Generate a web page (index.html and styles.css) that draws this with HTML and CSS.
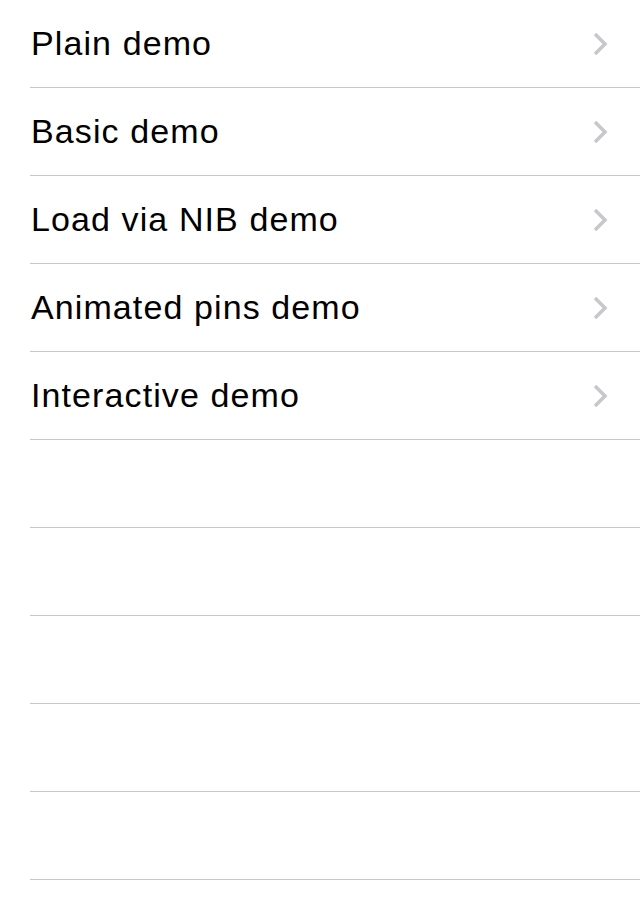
FILE: index.html
```html
<!DOCTYPE html>
<html>
<head>
<meta charset="utf-8">
<link rel="stylesheet" href="styles.css">
</head>
<body>
<ul class="list">
  <li class="row"><span class="label">Plain demo</span><svg class="chev" width="18" height="24" viewBox="0 0 18 24"><path d="M4 2 L14 12 L4 22" fill="none" stroke="#c7c7cc" stroke-width="3.5"/></svg></li>
  <li class="row"><span class="label">Basic demo</span><svg class="chev" width="18" height="24" viewBox="0 0 18 24"><path d="M4 2 L14 12 L4 22" fill="none" stroke="#c7c7cc" stroke-width="3.5"/></svg></li>
  <li class="row"><span class="label">Load via NIB demo</span><svg class="chev" width="18" height="24" viewBox="0 0 18 24"><path d="M4 2 L14 12 L4 22" fill="none" stroke="#c7c7cc" stroke-width="3.5"/></svg></li>
  <li class="row"><span class="label">Animated pins demo</span><svg class="chev" width="18" height="24" viewBox="0 0 18 24"><path d="M4 2 L14 12 L4 22" fill="none" stroke="#c7c7cc" stroke-width="3.5"/></svg></li>
  <li class="row"><span class="label">Interactive demo</span><svg class="chev" width="18" height="24" viewBox="0 0 18 24"><path d="M4 2 L14 12 L4 22" fill="none" stroke="#c7c7cc" stroke-width="3.5"/></svg></li>
  <li class="row"></li>
  <li class="row"></li>
  <li class="row"></li>
  <li class="row"></li>
  <li class="row"></li>
</ul>
</body>
</html>
```
FILE: styles.css
```css
html, body {
  margin: 0;
  padding: 0;
  background: #ffffff;
}
.list {
  list-style: none;
  margin: 0;
  padding: 0 0 0 30px;
}
.row {
  height: 87px;
  border-bottom: 1px solid #c8c7cc;
  display: flex;
  align-items: center;
  justify-content: space-between;
  padding-left: 1px;
  padding-right: 31px;
}
.label {
  font-family: "Liberation Sans", Arial, sans-serif;
  font-size: 34px;
  letter-spacing: 1.1px;
  color: #000000;
}
.chev {
  display: block;
}
```
